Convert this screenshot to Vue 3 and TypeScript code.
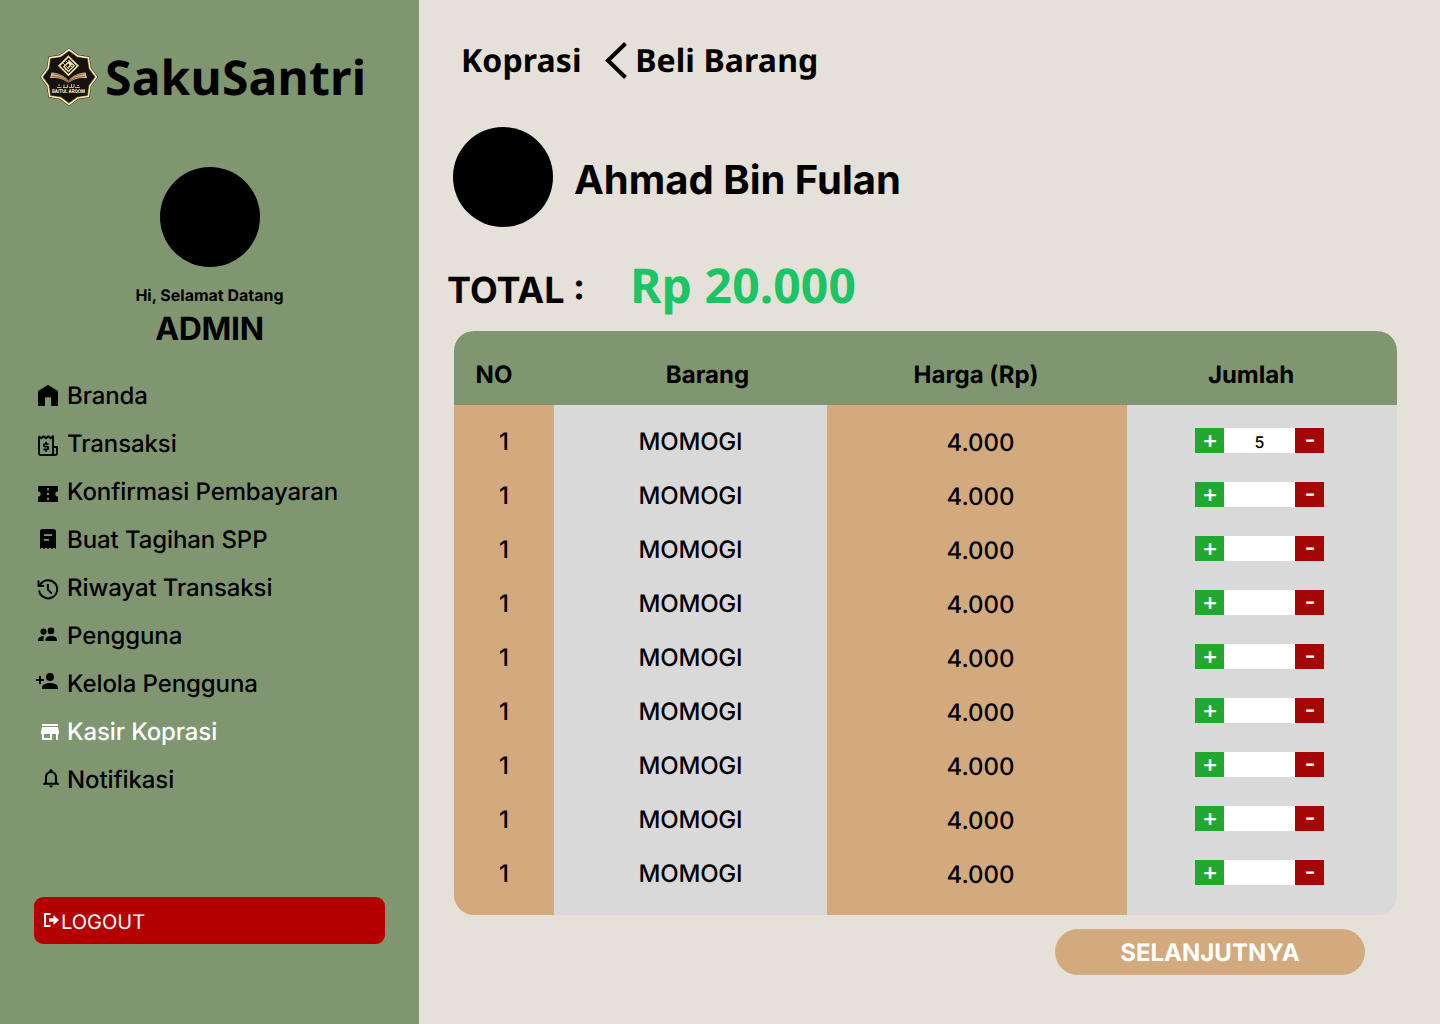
<script setup lang="ts">
import { ref } from 'vue'

interface MenuItem {
  label: string
  icon: string
  active?: boolean
}

interface Row {
  no: number
  name: string
  price: string
  qty: string
}

const menu: MenuItem[] = [
  { label: 'Branda', icon: 'home' },
  { label: 'Transaksi', icon: 'receipt' },
  { label: 'Konfirmasi Pembayaran', icon: 'ticket' },
  { label: 'Buat Tagihan SPP', icon: 'bill' },
  { label: 'Riwayat Transaksi', icon: 'history' },
  { label: 'Pengguna', icon: 'users' },
  { label: 'Kelola Pengguna', icon: 'user-add' },
  { label: 'Kasir Koprasi', icon: 'store', active: true },
  { label: 'Notifikasi', icon: 'bell' },
]

const rows = ref<Row[]>(
  Array.from({ length: 9 }, (_, i) => ({
    no: 1,
    name: 'MOMOGI',
    price: '4.000',
    qty: i === 0 ? '5' : '',
  })),
)

function step(row: Row, delta: number) {
  const next = Math.max(0, Number(row.qty || 0) + delta)
  row.qty = next ? String(next) : ''
}

// Eight-pointed badge outline, tips alternating with shallow inner corners
function star(outer: number, inner: number): string {
  return Array.from({ length: 16 }, (_, i) => {
    const r = i % 2 ? inner : outer
    const a = (i * Math.PI) / 8 - Math.PI / 2
    return `${(29 + r * Math.cos(a)).toFixed(2)},${(29 + r * Math.sin(a)).toFixed(2)}`
  }).join(' ')
}
</script>

<template>
  <div class="page">
    <aside class="sidebar">
      <div class="brand">
        <svg class="logo" width="58" height="58" viewBox="0 0 58 58">
          <polygon :points="star(29, 24)" fill="#2a261c" />
          <polygon :points="star(28.4, 23.5)" fill="#fbefc0" />
          <polygon :points="star(26.6, 22)" fill="#8c6c32" />
          <polygon :points="star(25.8, 21.3)" fill="#15120f" />
          <g fill="none" stroke="#f3e0a0">
            <path d="M28.500 8.500l9.300 9.300-9.300 9.300-9.300-9.300z" stroke-width="1.700" />
            <path d="M28.500 12.200l5.600 5.600-5.600 5.600-4.600-4.600 4.600-4.600 2.600 2.600-2.600 2.800" stroke-width="1.400" />
            <path d="M23 15l6.500 6.500M25.500 12.500l6.500 6.500M25.500 22l6.500-6.500" stroke-width=".8" />
          </g>
          <path d="M11.500 24.500c7 .5 13.500 3 17 8.500 3.500-5.500 9.500-8 17-8.500l1.500 5.500c-7-.5-13.500.5-18.500 5-5-4.500-11.500-5.500-18.500-5z" fill="#d9b96f" />
          <path d="M13.500 26c6.500.5 11.500 3 15 8 3.500-5 8.500-7.500 15-8M12 28.500c6.500 0 12 1.500 16.500 6 4.500-4.500 10-6 16.500-6" fill="none" stroke="#5a4526" stroke-width=".7" />
          <path d="M17 39.500h4.500M23 39.500h4.500M29 39.500h4.500M35 39.500h5M18 37h2M24 36.500v3M27.500 36.500v3M31.500 36v3.500M34 36v3.500M37 37.500h2" fill="none" stroke="#cdb274" stroke-width="1.100" />
          <text x="28.500" y="45.300" text-anchor="middle" textLength="33" lengthAdjust="spacingAndGlyphs">BAITUL ARQOM</text>
        </svg>
        <span class="brand-name">SakuSantri</span>
      </div>

      <div class="profile">
        <div class="avatar"></div>
        <div class="greeting">Hi, Selamat Datang</div>
        <div class="role">ADMIN</div>
      </div>

      <nav class="menu">
        <a v-for="item in menu" :key="item.label" class="menu-item" :class="{ active: item.active }">
          <svg width="31" height="48" viewBox="0 0 31 48" fill="currentColor">
            <path v-if="item.icon === 'home'" d="M2 34V20.200q0-1 .8-1.600L11 13.400q1-.7 2 0l8.200 5.200q.8.600.8 1.600V34h-6.800v-8q0-.8-.8-.8H9.800q-.8 0-.8.8v8z" />
            <g v-else-if="item.icon === 'receipt'" fill="none" stroke="currentColor" stroke-width="1.900">
              <path d="M3 16.200V33q0 2 2 2h14q2 0 2-2v-6h-4M17 35V16.200l-2.300 2-2.300-2-2.400 2-2.400-2-2.300 2L3 16.200" stroke-linejoin="round" />
              <path d="M12.600 24H9q-1.300 0-1.300 1.300T9 26.600h2q1.400 0 1.400 1.400T11 29.400H7.400M10 21.800V24m0 5.400v2.300" stroke-width="1.700" />
            </g>
            <path v-else-if="item.icon === 'ticket'" fill-rule="evenodd" d="M2 18h20v5.400a2.600 2.600 0 0 0 0 5.200V34H2v-5.400a2.600 2.600 0 0 0 0-5.200zM11 20.200v2h2v-2zm0 4.800v2h2v-2zm0 4.800v2h2v-2z" />
            <path v-else-if="item.icon === 'bill'" fill-rule="evenodd" d="M6.500 13h11Q20 13 20 15.500V33l-2-1.400-2 1.400-2-1.400-2 1.400-2-1.400L8 33l-2-1.400L4 33V15.500Q4 13 6.500 13zM8 18.200v1.800h8v-1.800zm0 4.800v1.800h5V23z" />
            <g v-else-if="item.icon === 'history'" fill="none" stroke="currentColor" stroke-width="2">
              <path d="M3.100 26.500a9.100 9.100 0 1 0 1.300-6.100l-1 1.100" />
              <path d="M2.500 16.500v5.400h5.700M11.900 20v5.700l4 3.900" />
            </g>
            <g v-else-if="item.icon === 'users'">
              <circle cx="7.500" cy="19.600" r="3.100" />
              <circle cx="15" cy="18.900" r="3.300" />
              <path d="M9.300 29v-1.200q.3-3.900 5.900-3.900t5.900 3.900V29zM2 29v-1q.3-3.600 5.700-3.900Q7.500 26 7.500 29z" />
            </g>
            <g v-else-if="item.icon === 'user-add'">
              <circle cx="14" cy="16.900" r="4" />
              <path d="M6 29v-2c0-2.700 5.300-4.100 8-4.100s8 1.400 8 4.100v2zM3 16h2v3h3v2H5v3H3v-3H0v-2h3z" />
            </g>
            <path v-else-if="item.icon === 'store'" transform="translate(2 12)" d="M20 4H4v2h16V4zm1 10v-2l-1-5H4l-1 5v2h1v6h10v-6h4v6h2v-6h1zm-9 4H6v-4h6v4z" />
            <path v-else transform="translate(3 11) scale(1 .93)" d="M12 22c1.100 0 2-.9 2-2h-4c0 1.100.9 2 2 2zm6-6v-5c0-3.070-1.630-5.640-4.500-6.320V4c0-.83-.67-1.500-1.500-1.500s-1.500.67-1.500 1.500v.68C7.640 5.360 6 7.920 6 11v5l-2 2v1h16v-1l-2-2zm-2 1H8v-6c0-2.480 1.510-4.500 4-4.500s4 2.020 4 4.500v6z" />
          </svg>
          <span>{{ item.label }}</span>
        </a>
      </nav>

      <button class="logout">
        <svg width="17" height="16" viewBox="0 0 17 16">
          <path d="M7.500 2H2v12h5.500" fill="none" stroke="#fff" stroke-width="2" />
          <path d="M6 6.300h4.500V3L16 8l-5.500 5V9.700H6z" fill="#fff" />
        </svg>
        <span>LOGOUT</span>
      </button>
    </aside>

    <main class="content">
      <header class="crumbs">
        <span>Koprasi</span>
        <svg width="24" height="38" viewBox="0 0 24 38">
          <path d="M21.500 2.500L4 19.500l17.500 17" fill="none" stroke="#000" stroke-width="4" />
        </svg>
        <span>Beli Barang</span>
      </header>

      <section class="customer">
        <div class="avatar"></div>
        <h1>Ahmad Bin Fulan</h1>
      </section>

      <section class="total">
        <span class="total-label">TOTAL :</span>
        <span class="total-value">Rp 20.000</span>
      </section>

      <section class="table">
        <div class="row head">
          <div class="c-no"><span>NO</span></div>
          <div class="c-name"><span>Barang</span></div>
          <div class="c-price"><span>Harga (Rp)</span></div>
          <div class="c-qty"><span>Jumlah</span></div>
        </div>
        <div class="body">
          <div v-for="(row, i) in rows" :key="i" class="row">
            <div class="c-no">{{ row.no }}</div>
            <div class="c-name">{{ row.name }}</div>
            <div class="c-price">{{ row.price }}</div>
            <div class="c-qty">
              <div class="stepper">
                <button class="plus" @click="step(row, 1)">+</button>
                <span class="qty">{{ row.qty }}</span>
                <button class="minus" @click="step(row, -1)">-</button>
              </div>
            </div>
          </div>
        </div>
      </section>

      <button class="next">SELANJUTNYA</button>
    </main>
  </div>
</template>

<style>
body {
  margin: 0;
}
</style>

<style scoped>
.page {
  display: flex;
  width: 1440px;
  height: 1024px;
  overflow: hidden;
  background: #e5e0d8;
  color: #000;
  font-family: Inter, sans-serif;
  text-rendering: geometricPrecision;
  white-space: nowrap;
}
.page * {
  box-sizing: border-box;
}
button {
  border: 0;
  padding: 0;
  margin: 0;
  font-family: inherit;
  text-rendering: inherit;
  color: #fff;
}
svg {
  display: block;
  flex: none;
}
.sidebar {
  display: flex;
  flex-direction: column;
  flex: none;
  width: 419px;
  background: #809671;
}
.brand {
  display: flex;
  align-items: center;
  height: 58px;
  margin: 48px 0 0 39.5px;
}
.logo {
  margin-top: -1px;
}
.logo text {
  font: 700 5px Inter, sans-serif;
  fill: #fff3c8;
}
.brand-name {
  margin: 2px 0 0 7.5px;
  font: 700 48px/58px "Noto Sans", sans-serif;
  letter-spacing: 0.2px;
}
.avatar {
  flex: none;
  width: 100px;
  height: 100px;
  border-radius: 50%;
  background: #000;
}
.profile {
  display: flex;
  flex-direction: column;
  align-items: center;
  margin-top: 61px;
}
.greeting {
  margin-top: 18px;
  font-size: 16px;
  font-weight: 700;
  line-height: 20px;
}
.role {
  margin-top: 4px;
  font-size: 32px;
  font-weight: 700;
  line-height: 39px;
  letter-spacing: -0.3px;
}
.menu {
  margin: 24px 0 0 36px;
}
.menu-item {
  display: flex;
  align-items: center;
  height: 48px;
  font-size: 24px;
  font-weight: 500;
  letter-spacing: -0.1px;
}
.menu-item span {
  margin-top: -2px;
}
.menu-item.active {
  color: #fff;
}
.logout {
  display: flex;
  align-items: center;
  width: 351px;
  height: 47px;
  margin: 93px 0 0 34px;
  padding-left: 9px;
  border-radius: 9px;
  background: #b40000;
  font-size: 20px;
}
.logout svg {
  margin-top: -1px;
}
.logout span {
  margin: 3px 0 0 1px;
}
.content {
  flex: 1;
  display: flex;
  flex-direction: column;
}
.crumbs {
  display: flex;
  align-items: center;
  height: 38px;
  margin: 41px 0 0 42px;
  font: 700 32px/38px "Noto Sans", sans-serif;
  letter-spacing: 0.1px;
}
.crumbs span {
  margin-top: 2px;
}
.crumbs svg {
  margin: 0 7px 0 22.5px;
}
.customer {
  display: flex;
  align-items: center;
  margin: 48px 0 0 34px;
}
.customer h1 {
  margin: 6px 0 0 21px;
  font-size: 40px;
  font-weight: 700;
  line-height: 48px;
}
.total {
  display: flex;
  align-items: baseline;
  height: 66px;
  margin: 26px 0 0 28px;
}
.total-label {
  width: 183px;
  font-size: 36px;
  font-weight: 700;
}
.total-value {
  font: 700 48px/66px "Noto Sans", sans-serif;
  letter-spacing: 0.1px;
  color: #1bc464;
}
.table {
  width: 943px;
  margin: 12px 0 0 35px;
  border-radius: 20px;
  overflow: hidden;
}
.row {
  display: grid;
  grid-template-columns: 100px 273px 300px 270px;
  height: 54px;
  font-size: 24px;
  font-weight: 500;
  text-align: center;
  line-height: 56px;
}
.head {
  height: 74px;
  padding-top: 12px;
  line-height: 63px;
  background: #809671;
  font-weight: 700;
}
.head .c-no {
  padding-right: 20px;
}
.head .c-name {
  padding-left: 34px;
}
.head .c-price {
  padding-right: 2px;
}
.head .c-qty {
  padding-right: 22px;
}
.body {
  height: 510px;
  padding-top: 9px;
  background: linear-gradient(
    90deg,
    #d2aa7e 0 100px,
    #d9d9d9 100px 373px,
    #d2aa7e 373px 673px,
    #d9d9d9 673px
  );
}
.body .c-name {
  letter-spacing: -0.2px;
}
.body .c-price {
  padding: 1px 0 0 7px;
}
.stepper {
  display: flex;
  width: 129px;
  height: 25px;
  margin: 14px 0 0 68px;
  line-height: 25px;
}
.plus,
.minus {
  width: 29px;
  height: 25px;
  padding: 0 0 2px 1px;
  font-size: 24px;
  font-weight: 500;
  line-height: 24px;
}
.plus {
  background: #22a82f;
}
.minus {
  background: #a50606;
}
.qty {
  flex: 1;
  height: 25px;
  background: #fff;
  font-size: 16px;
  line-height: 28px;
}
.next {
  width: 310px;
  height: 46px;
  margin: 14px 0 0 636px;
  padding-top: 1px;
  border-radius: 23px;
  background: #d2aa7e;
  font-size: 24px;
  font-weight: 700;
  line-height: 46px;
}
</style>
